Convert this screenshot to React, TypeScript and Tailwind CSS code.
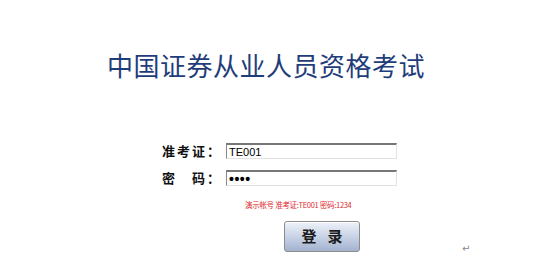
export default function App() {
  return (
    <div className="w-[550px] h-[272px] bg-white overflow-hidden font-['Noto_Sans_CJK_SC',sans-serif]">
      <h1 className="pt-[50px] pl-[107px] text-[26px] leading-[30px] font-normal tracking-[0.5px] text-[#1f3d7a]">
        中国证券从业人员资格考试
      </h1>

      <div className="mt-[61px] flex flex-col gap-[7px]">
        <div className="flex items-center h-[20px] pl-[162px]">
          <span className="w-[64px] text-[13px] leading-[20px] font-bold tracking-[2px] text-[#111]">准考证：</span>
          <input
            readOnly
            value="TE001"
            className="w-[171px] h-[16px] px-[2px] text-[11px] leading-[14px] font-['Liberation_Sans',sans-serif] text-black outline-none border-t-2 border-l border-r border-b border-t-[#777] border-l-[#888] border-r-[#e2e2e2] border-b-[#e2e2e2]"
          />
        </div>
        <div className="flex items-center h-[20px] pl-[162px]">
          <span className="w-[64px] text-[13px] leading-[20px] font-bold tracking-[2px] text-[#111]">密　码：</span>
          <input
            readOnly
            value="••••"
            className="w-[171px] h-[16px] px-[2px] text-[14px] leading-[14px] tracking-[0.5px] font-bold font-['Liberation_Sans',sans-serif] text-black outline-none border-t-2 border-l border-r border-b border-t-[#777] border-l-[#888] border-r-[#e2e2e2] border-b-[#e2e2e2]"
          />
        </div>
      </div>

      <p className="mt-[11px] pl-[245px] text-[7.5px] leading-[12px] tracking-[-0.3px] text-[#e0282c] whitespace-nowrap">
        演示帐号 准考证:TE001 密码:1234
      </p>

      <div className="mt-[10px] pl-[284px] flex items-end">
        <button className="w-[76px] h-[31px] rounded-[3px] border border-[#8c8c8c] bg-gradient-to-b from-[#eef2f9] via-[#c9d3e6] to-[#a3b2d0] flex items-center justify-center gap-[11px] text-[15px] font-bold text-[#1a1a1a] shadow-[inset_0_1px_0_#ffffff]">
          <span>登</span>
          <span>录</span>
        </button>
        <span className="ml-[102px] mb-[-3px] text-[10px] leading-[12px] text-[#888] font-['DejaVu_Sans',sans-serif]">↵</span>
      </div>
    </div>
  )
}
